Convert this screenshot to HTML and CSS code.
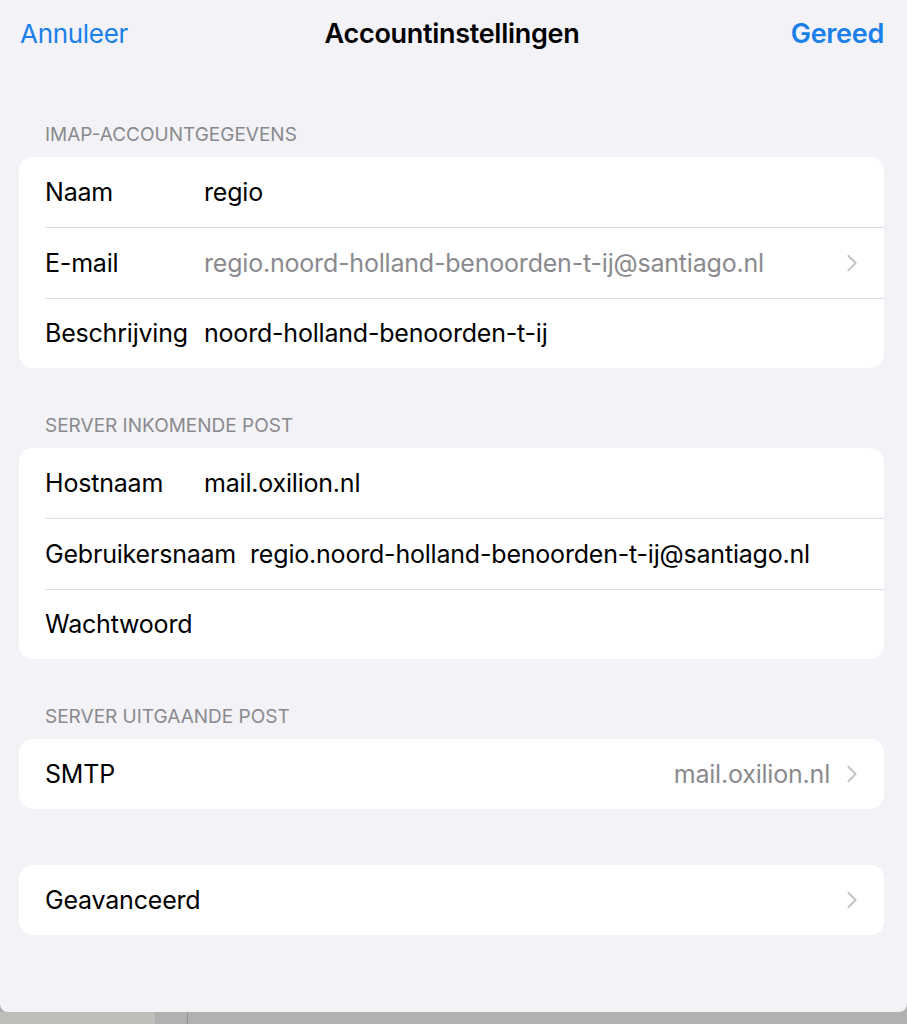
FILE: index.html
```html
<!DOCTYPE html>
<html lang="nl">
<head>
  <meta charset="UTF-8">
  <title>Accountinstellingen</title>
  <meta name="viewport" content="width=device-width, initial-scale=1.0">
  <link rel="stylesheet" href="styles.css">
</head>
<body>
  <div class="sheet">
    <!-- Navigation bar -->
    <div class="nav">
      <span class="nav-btn">Annuleer</span>
      <span class="nav-title">Accountinstellingen</span>
      <span class="nav-btn done">Gereed</span>
    </div>

    <div class="section-title first">IMAP-ACCOUNTGEGEVENS</div>
    <div class="card">
      <div class="row">
        <span class="label">Naam</span>
        <span class="value">regio</span>
      </div>
      <div class="row">
        <span class="label">E-mail</span>
        <span class="value muted">regio.noord-holland-benoorden-t-ij@santiago.nl</span>
        <svg class="chevron" viewBox="0 0 12 20"><path d="M2 2 L10 10 L2 18" /></svg>
      </div>
      <div class="row">
        <span class="label">Beschrijving</span>
        <span class="value">noord-holland-benoorden-t-ij</span>
      </div>
    </div>

    <div class="section-title">SERVER INKOMENDE POST</div>
    <div class="card">
      <div class="row">
        <span class="label">Hostnaam</span>
        <span class="value">mail.oxilion.nl</span>
      </div>
      <div class="row">
        <span class="label">Gebruikersnaam</span>
        <span class="value">regio.noord-holland-benoorden-t-ij@santiago.nl</span>
      </div>
      <div class="row">
        <span class="label">Wachtwoord</span>
        <span class="value"></span>
      </div>
    </div>

    <div class="section-title">SERVER UITGAANDE POST</div>
    <div class="card">
      <div class="row">
        <span class="label">SMTP</span>
        <span class="value muted right">mail.oxilion.nl</span>
        <svg class="chevron" viewBox="0 0 12 20"><path d="M2 2 L10 10 L2 18" /></svg>
      </div>
    </div>

    <div class="card spaced">
      <div class="row">
        <span class="label">Geavanceerd</span>
        <span class="value"></span>
        <svg class="chevron" viewBox="0 0 12 20"><path d="M2 2 L10 10 L2 18" /></svg>
      </div>
    </div>
  </div>

  <!-- Strip of the window behind the sheet -->
  <div class="strip">
    <div class="strip-left"></div>
    <div class="strip-line"></div>
  </div>
</body>
</html>
```

FILE: styles.css
```css
:root {
  --bg: #f2f2f7;
  --card: #ffffff;
  --text: #000000;
  --muted: #8a8a8e;
  --blue: #1a7fe8;
  --sep: #dcdce0;
  --chevron: #c4c4c8;
}

* {
  margin: 0;
  padding: 0;
  box-sizing: border-box;
}

body {
  background: #b0b2b2;
  font-family: Inter, "Noto Sans", sans-serif;
  color: var(--text);
  width: 907px;
  height: 1024px;
  display: flex;
  flex-direction: column;
  overflow: hidden;
}

.sheet {
  background: var(--bg);
  height: 1012px;
  border-radius: 0 0 8px 8px;
  padding: 0 23px 0 19px;
}

/* Navigation */
.nav {
  display: grid;
  grid-template-columns: 1fr auto 1fr;
  align-items: center;
  height: 66px;
  padding-left: 1px;
  letter-spacing: -0.3px;
}
.nav-btn {
  color: var(--blue);
  font-size: 26px;
}
.nav-btn.done {
  font-size: 27px;
  font-weight: 600;
  text-align: right;
}
.nav-title {
  font-size: 27px;
  font-weight: 600;
}

/* Section headers */
.section-title {
  display: flex;
  align-items: flex-end;
  height: 80px;
  padding: 0 0 10px 26px;
  color: var(--muted);
  font-size: 19px;
  line-height: 24px;
}
.section-title.first {
  height: 91px;
}

/* Grouped cards */
.card {
  background: var(--card);
  border-radius: 14px;
  overflow: hidden;
}
.card.spaced {
  margin-top: 56px;
}

.row {
  display: flex;
  align-items: center;
  height: 70px;
  margin-left: 26px;
  padding-right: 26px;
  font-size: 25px;
  letter-spacing: -0.2px;
}
.row + .row {
  height: 70.5px;
  border-top: 1px solid var(--sep);
}
.label {
  min-width: 145px;
  margin-right: 14px;
  white-space: nowrap;
}
.value {
  flex-grow: 1;
  white-space: nowrap;
}
.value.right {
  text-align: right;
}
.muted {
  color: var(--muted);
}
.chevron {
  width: 12px;
  height: 18px;
  margin-left: 16px;
  fill: none;
  stroke: var(--chevron);
  stroke-width: 2.2;
  stroke-linecap: round;
  stroke-linejoin: round;
}

/* Bottom strip */
.strip {
  flex-grow: 1;
  display: flex;
}
.strip-left {
  width: 155px;
  background: #bcbeba;
}
.strip-line {
  width: 1px;
  margin-left: 32px;
  background: #8f9191;
}
```
